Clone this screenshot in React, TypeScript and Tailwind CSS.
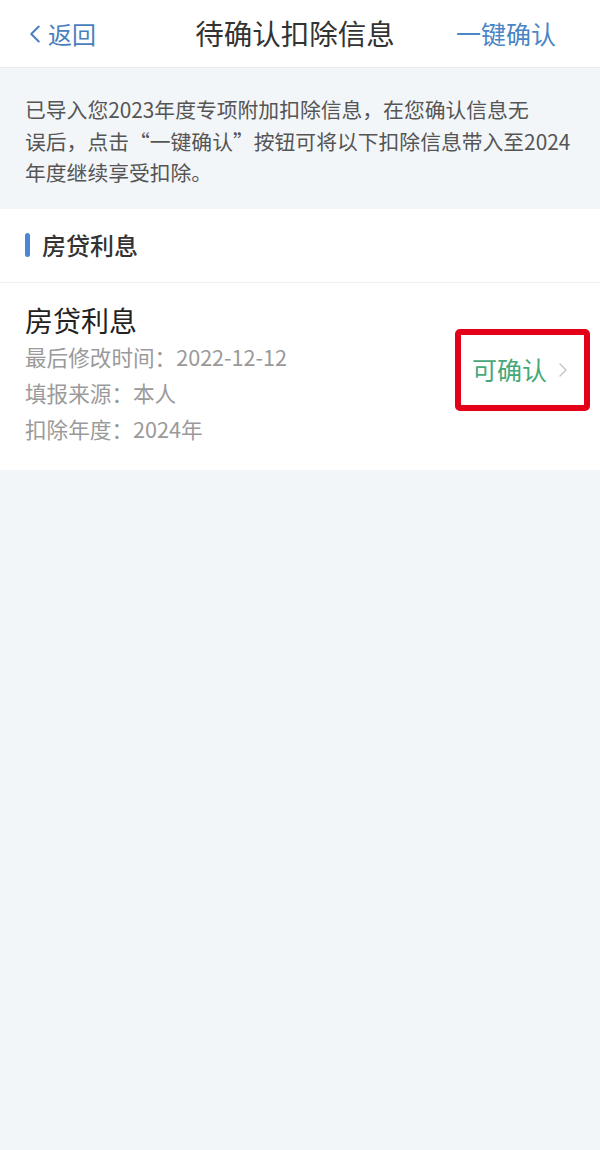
import { ChevronLeft, ChevronRight } from "lucide-react";

const font = { fontFamily: '"Noto Sans CJK SC", "Noto Sans", sans-serif' };

const details = [
  "最后修改时间：2022-12-12",
  "填报来源：本人",
  "扣除年度：2024年",
];

export default function App() {
  return (
    <div style={font} className="flex min-h-[1150px] w-[600px] flex-col bg-[#f3f6f9]">
      <header className="flex h-[68px] items-center justify-between border-b border-[#e6e9ee] bg-white pl-[20px] pr-[44px]">
        <div className="flex w-[120px] items-center text-[24px] text-[#4a7fbf]">
          <ChevronLeft className="-mr-[2px] h-[30px] w-[30px]" strokeWidth={1.6} />
          <span>返回</span>
        </div>
        <h1 className="pl-[14px] text-[28.5px] font-normal text-[#333]">待确认扣除信息</h1>
        <div className="w-[120px] text-right text-[25px] text-[#4a86c6]">一键确认</div>
      </header>

      <p className="whitespace-nowrap pl-[25px] pt-[26px] pb-[20px] text-[20.8px] leading-[31.5px] text-[#555]">
        已导入您2023年度专项附加扣除信息，在您确认信息无
        <br />
        误后，点击“一键确认”按钮可将以下扣除信息带入至2024
        <br />
        年度继续享受扣除。
      </p>

      <section className="bg-white">
        <div className="flex h-[74px] items-center gap-[12px] border-b border-[#eef0f3] px-[25px]">
          <span className="h-[24px] w-[5px] rounded-full bg-[#4a86d6]" />
          <span className="text-[24px] font-medium text-[#333]">房贷利息</span>
        </div>

        <div className="flex items-center justify-between pt-[18px] pb-[23px] pl-[25px] pr-[10px]">
          <div className="flex flex-col">
            <div className="text-[28px] leading-[38px] text-[#222]">房贷利息</div>
            {details.map((d) => (
              <div key={d} className="text-[21.6px] leading-[36px] text-[#9a9a9a]">
                {d}
              </div>
            ))}
          </div>

          <div className="-mt-[8px] flex h-[82px] w-[135px] items-center justify-center rounded-[5px] border-[6px] border-[#e5001a]">
            <span className="pl-[2px] text-[25px] text-[#46a878]">可确认</span>
            <ChevronRight className="ml-[4px] h-[24px] w-[24px] text-[#c4c4c4]" strokeWidth={1.4} />
          </div>
        </div>
      </section>
    </div>
  );
}
